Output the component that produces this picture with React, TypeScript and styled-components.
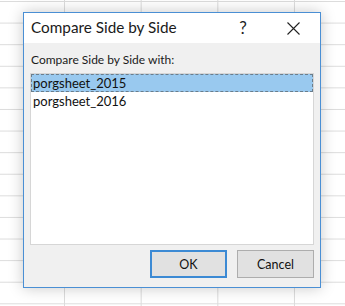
import React, { useState } from 'react';
import styled, { createGlobalStyle } from 'styled-components';

const GlobalStyle = createGlobalStyle`
	html, body {
		margin: 0;
		padding: 0;
		height: 100%;
	}
	body {
		font-family: Lato, 'Open Sans', sans-serif;
		background-color: #ffffff;
		background-image:
			linear-gradient(to right, #dcdcdc 1px, transparent 1px),
			linear-gradient(to bottom, #dcdcdc 1px, transparent 1px);
		background-size: 76.67px 21.6px;
		background-position: 64px 1px;
	}
`;

const sheets = ['porgsheet_2015', 'porgsheet_2016'];

const App = () => {
	const [selected, setSelected] = useState(0);

	return (
		<>
			<GlobalStyle />
			<Page>
				<Dialog>
					<TitleBar>
						<Title>Compare Side by Side</Title>
						<HelpButton aria-label="Help">?</HelpButton>
						<CloseButton aria-label="Close">
							<svg width="13" height="13" viewBox="0 0 13 13">
								<path d="M0.5 0.5 L12.5 12.5 M12.5 0.5 L0.5 12.5" stroke="#222" strokeWidth="1.1" fill="none" />
							</svg>
						</CloseButton>
					</TitleBar>
					<Body>
						<Label>Compare Side by Side with:</Label>
						<ListBox>
							{sheets.map((name, i) => (
								<ListItem key={name} selected={i === selected} onClick={() => setSelected(i)}>
									{name}
								</ListItem>
							))}
						</ListBox>
						<ButtonRow>
							<Button primary>OK</Button>
							<Button>Cancel</Button>
						</ButtonRow>
					</Body>
				</Dialog>
			</Page>
		</>
	);
};

const Page = styled.div`
	padding: 12px 0 0 23px;
`;

const Dialog = styled.div`
	width: 296px;
	height: 274px;
	border: 1px solid #4a8fd4;
	background: #f0f0f0;
	box-shadow: 0 0 14px rgba(0, 0, 0, 0.22);
	display: flex;
	flex-direction: column;
`;

const TitleBar = styled.div`
	height: 31px;
	background: #ffffff;
	display: flex;
	align-items: center;
	padding-left: 7px;
	padding-right: 20px;
`;

const Title = styled.div`
	flex: 1;
	font-size: 15.3px;
	color: #1a1a1a;
	padding-bottom: 2px;
`;

const HelpButton = styled.div`
	width: 14px;
	margin-right: 37px;
	text-align: center;
	font-size: 17px;
	color: #222;
	padding-bottom: 2px;
`;

const CloseButton = styled.div`
	width: 13px;
	height: 13px;
	display: flex;
`;

const Body = styled.div`
	flex: 1;
	display: flex;
	flex-direction: column;
	padding: 9px 6px 9px 6px;
`;

const Label = styled.div`
	font-size: 12px;
	color: #1a1a1a;
	line-height: 16px;
	padding-left: 1px;
	margin-bottom: 5px;
`;

const ListBox = styled.div`
	height: 170px;
	border: 1px solid #d6d6d6;
	background: #ffffff;
`;

const ListItem = styled.div<{ selected?: boolean }>`
	height: 16px;
	line-height: 16px;
	font-size: 13px;
	color: #111;
	padding-left: 1px;
	border: 1px dashed ${(p) => (p.selected ? '#6a7d8c' : 'transparent')};
	background: ${(p) => (p.selected ? '#99c9ef' : 'transparent')};
	cursor: default;
`;

const ButtonRow = styled.div`
	display: flex;
	justify-content: flex-end;
	gap: 10px;
	margin-top: 5px;
`;

const Button = styled.button<{ primary?: boolean }>`
	width: 77px;
	height: 28px;
	font-family: inherit;
	font-size: 12.5px;
	color: #111;
	background: #e1e1e1;
	border: ${(p) => (p.primary ? '2px solid #3c8ad4' : '1px solid #adadad')};
	padding: 0;
`;

export default App;
